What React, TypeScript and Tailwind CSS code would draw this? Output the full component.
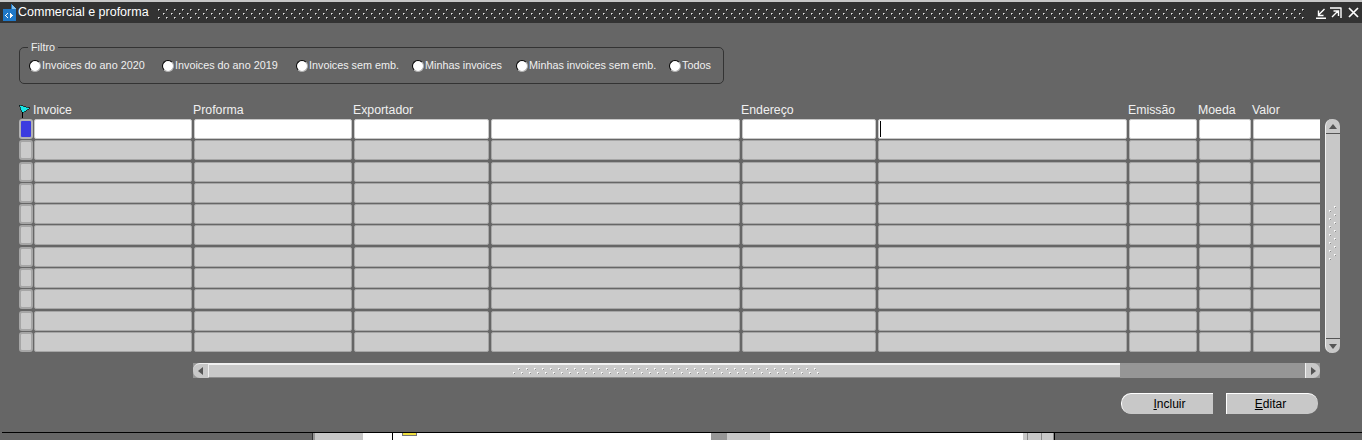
import React from "react";

const widths = [160, 160, 137, 251, 136, 251, 70, 54, 67];
const cols = "grid grid-cols-[15px_160px_160px_137px_251px_136px_251px_70px_54px_67px]";
const headers = ["", "Invoice", "Proforma", "Exportador", "", "Endereço", "", "Emissão", "Moeda", "Valor"];
const radios: [string, string][] = [
  ["Invoices do ano 2020", "w-[133px]"],
  ["Invoices do ano 2019", "w-[134px]"],
  ["Invoices sem emb.", "w-[116px]"],
  ["Minhas invoices", "w-[104px]"],
  ["Minhas invoices sem emb.", "w-[153px]"],
  ["Todos", "w-[50px]"],
];

function Dots({
  id,
  className,
  w,
  h,
  yOff = 0,
  hi = "#e8e8e8",
  mid = "#9a9a9a",
  lo = "#111",
}: {
  id: string;
  className?: string;
  w: number;
  h: number;
  yOff?: number;
  hi?: string;
  mid?: string;
  lo?: string;
}) {
  return (
    <svg width={w} height={h} className={className} shapeRendering="crispEdges">
      <defs>
        <pattern id={id} x="0" y={yOff} width="8" height="8" patternUnits="userSpaceOnUse">
          <rect x="0" y="0" width="1" height="1" fill={hi} />
          <rect x="1" y="0" width="1" height="1" fill={mid} />
          <rect x="0" y="1" width="1" height="1" fill={mid} />
          <rect x="1" y="1" width="1" height="1" fill={lo} />
          <rect x="5" y="4" width="1" height="1" fill={hi} />
          <rect x="6" y="4" width="1" height="1" fill={mid} />
          <rect x="5" y="5" width="1" height="1" fill={mid} />
          <rect x="6" y="5" width="1" height="1" fill={lo} />
        </pattern>
      </defs>
      <rect width={w} height={h} fill={`url(#${id})`} />
    </svg>
  );
}

function Cell({ active, last }: { active?: boolean; last?: boolean }) {
  const bg = active ? "bg-white border-[#c8c8c8]" : "bg-[#cbcbcb] border-[#a6a6a6]";
  return (
    <div
      className={`h-[20px] border rounded-[2px] ${bg} ${last ? "border-r-0 rounded-r-none" : "mr-[2px]"}`}
    />
  );
}

function Row({ active }: { active?: boolean }) {
  return (
    <div className={`${cols} h-[21.3px]`}>
      <div
        className={`h-[20px] w-[14px] border-2 rounded-[3px] ${
          active ? "bg-[#3c3ce0] border-[#b2b2b2]" : "bg-[#cbcbcb] border-[#a6a6a6]"
        }`}
      />
      {widths.map((_, i) =>
        active && i === 5 ? (
          <div key={i} className="h-[20px] mr-[2px] border border-[#c8c8c8] rounded-[2px] bg-white flex items-center pl-px">
            <div className="w-px h-[16px] bg-black" />
          </div>
        ) : (
          <Cell key={i} active={active} last={i === widths.length - 1} />
        )
      )}
    </div>
  );
}

export default function App() {
  return (
    <div className="w-[1362px] h-[440px] overflow-hidden bg-[#666666] flex flex-col font-['Liberation_Sans',Arial,sans-serif] text-[#f0f0f0]">
      <div className="h-[432px] shrink-0 flex flex-col">
        {/* Title bar */}
        <div className="h-[23px] shrink-0 border-t-[2px] border-[#c8c8c8] bg-[#333333] flex items-center">
          <svg width="15" height="17" viewBox="0 0 15 17" className="ml-[2px] shrink-0" shapeRendering="crispEdges">
            <path d="M1 5h8V0l5 5v12H1z" fill="#1f78c8" />
            <path d="M10 1l4 4h-4z" fill="#7fc0f0" />
            <path d="M5 9h1v1H5zM4 10h1v1H4zM3 11h1v1H3zM4 12h1v1H4zM5 13h1v1H5zM8 9h1v5H8zM9 10h1v3H9zM10 11h1v1h-1z" fill="#fff" />
          </svg>
          <span className="ml-px text-[12.5px] leading-none text-white whitespace-nowrap">Commercial e proforma</span>
          <Dots id="title-dots" w={1147} h={10} className="ml-[9px] self-start mt-[7px] shrink-0" />
          <div className="ml-[10px] flex items-center gap-[3px]">
            <svg width="12" height="12" viewBox="0 0 12 12" stroke="#fff" fill="none" strokeWidth="1.4">
              <path d="M1 11.2h10M9.5 2L4 7.5M3.5 3.5v5h5" />
            </svg>
            <svg width="12" height="12" viewBox="0 0 12 12" stroke="#fff" fill="none" strokeWidth="1.4">
              <path d="M0 1h11.5M11 1v10M2 10l6-6M3.5 4h5v5" />
            </svg>
            <svg width="13" height="13" viewBox="0 0 13 13" stroke="#fff" fill="none" strokeWidth="1.7" className="ml-[2px]">
              <path d="M2 2l9 9M11 2l-9 9" />
            </svg>
          </div>
        </div>

        {/* Filter group */}
        <div className="relative mt-[24px] ml-[19px] w-[705px] h-[37px] border border-[#333333] rounded-[5px] pl-[9px] flex items-center shrink-0">
          <span className="absolute -top-[7px] left-[8px] px-[3px] bg-[#666666] text-[10.8px] leading-[13px]">Filtro</span>
          {radios.map(([label, w]) => (
            <div key={label} className={`${w} shrink-0 flex items-center`}>
              <span className="w-[12px] h-[12px] rounded-full bg-white border border-t-black border-l-black border-r-[#b0b0b0] border-b-[#b0b0b0] shrink-0" />
              <span className="ml-px text-[10.8px] leading-none whitespace-nowrap">{label}</span>
            </div>
          ))}
        </div>

        {/* Table */}
        <div className="mt-[19px] ml-[19px] flex items-start gap-[5px] shrink-0">
          <div className="w-[1301px]">
            <div className={`${cols} h-[16px]`}>
              {headers.map((h, i) =>
                i === 0 ? (
                  <svg key={i} width="13" height="14" viewBox="0 0 13 14" className="mt-[1px]" shapeRendering="crispEdges">
                    <path d="M3 8h1v6H3z" fill="#000" />
                    <path d="M0 1l11 3-7 5-1-1z" fill="#19e6e6" stroke="#000" strokeWidth="0.6" />
                  </svg>
                ) : (
                  <span key={i} className="-ml-px text-[12.3px] leading-[15px] whitespace-nowrap">{h}</span>
                )
              )}
            </div>
            {Array.from({ length: 11 }).map((_, i) => (
              <Row key={i} active={i === 0} />
            ))}
          </div>

          {/* Vertical scrollbar */}
          <div className="mt-[16px] w-[15px] h-[234px] bg-[#c8c8c8] border-l border-[#f0f0f0] rounded-[7px] flex flex-col items-center overflow-hidden">
            <div className="h-[15px] w-full shrink-0 border-b border-[#555] flex items-center justify-center">
              <span className="w-0 h-0 border-x-[4px] border-x-transparent border-b-[5px] border-b-[#555]" />
            </div>
            <Dots id="v-dots" w={8} h={54} yOff={4} hi="#ffffff" mid="#e6e6e6" lo="#8c8c8c" className="mt-[72px] shrink-0" />
            <div className="flex-1" />
            <div className="h-[15px] w-full shrink-0 border-t border-[#555] flex items-center justify-center">
              <span className="w-0 h-0 border-x-[4px] border-x-transparent border-t-[5px] border-t-[#555]" />
            </div>
          </div>
        </div>

        {/* Horizontal scrollbar */}
        <div className="mt-[10px] ml-[193px] w-[1127px] h-[15px] bg-[#969696] flex shrink-0">
          <div className="w-[15px] bg-[#c8c8c8] border-t border-[#f0f0f0] rounded-l-[7px] flex items-center justify-center shrink-0">
            <span className="w-0 h-0 border-y-[4px] border-y-transparent border-r-[5px] border-r-[#555]" />
          </div>
          <div className="w-[912px] bg-[#c8c8c8] border-t-2 border-l border-b border-t-[#f0f0f0] border-l-[#f0f0f0] border-b-[#8c8c8c] flex items-start pl-[304px] pt-[3px] shrink-0">
            <Dots id="h-dots" w={306} h={8} yOff={4} hi="#ffffff" mid="#e6e6e6" lo="#8c8c8c" className="shrink-0" />
          </div>
          <div className="flex-1" />
          <div className="w-[15px] bg-[#c8c8c8] border-l border-[#f0f0f0] rounded-r-[7px] flex items-center justify-center shrink-0">
            <span className="w-0 h-0 border-y-[4px] border-y-transparent border-l-[5px] border-l-[#555]" />
          </div>
        </div>

        {/* Buttons */}
        <div className="mt-[15px] mr-[44px] flex justify-end gap-[13px] shrink-0">
          <button className="w-[92px] h-[21px] pl-[4px] bg-[#c8c8c8] border-t border-l border-white rounded-l-[10px] text-[12px] leading-none text-black">
            <u>I</u>ncluir
          </button>
          <button className="w-[92px] h-[21px] pr-[4px] bg-[#c8c8c8] border-t border-l border-white rounded-r-[10px] text-[12px] leading-none text-black">
            <u>E</u>ditar
          </button>
        </div>
      </div>

      {/* Window underneath */}
      <div className="ml-[2px] h-px bg-black shrink-0" />
      <div className="flex-1 flex">
        <div className="w-[312px]" />
        <div className="w-px bg-[#333]" />
        <div className="w-[2px] bg-[#969696]" />
        <div className="w-[48px] bg-[#c8c8c8]" />
        <div className="w-[29px] bg-white" />
        <div className="w-px bg-black" />
        <div className="w-[318px] bg-white relative">
          <div className="absolute left-[9px] top-0 w-[15px] h-[3px] bg-[#f0e040] border-x border-b border-[#777]" />
        </div>
        <div className="w-[16px] bg-[#969696]" />
        <div className="w-[43px] bg-[#c8c8c8]" />
        <div className="w-[253px] bg-white" />
        <div className="w-[4px] bg-[#c8c8c8]" />
        <div className="w-px bg-[#888]" />
        <div className="w-[13px] bg-[#c8c8c8]" />
        <div className="w-px bg-[#888]" />
        <div className="w-[11px] bg-[#c8c8c8]" />
        <div className="w-px bg-[#888]" />
        <div className="w-px bg-black" />
      </div>
    </div>
  );
}
